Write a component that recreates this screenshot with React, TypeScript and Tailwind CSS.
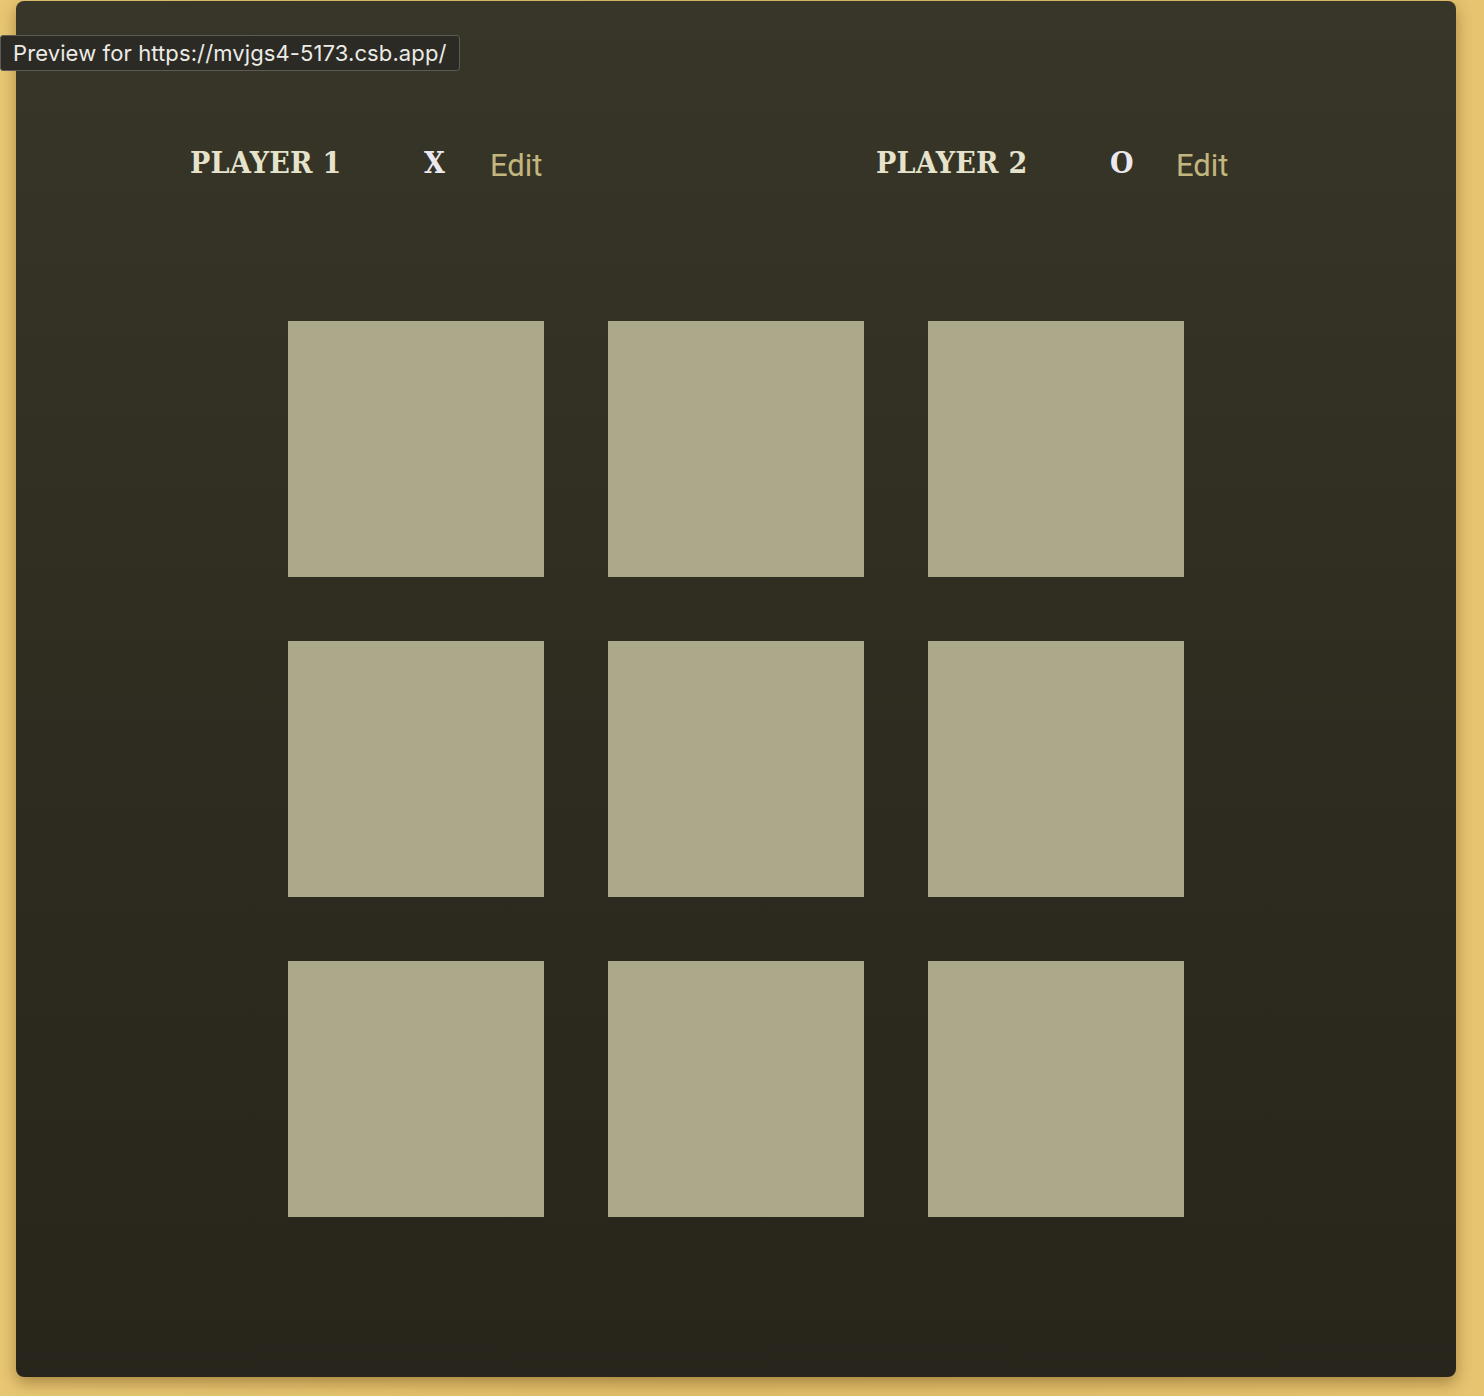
import React from "react";

const players = [
  { name: "PLAYER 1", symbol: "X" },
  { name: "PLAYER 2", symbol: "O" },
];

export default function App() {
  const cells = Array.from({ length: 9 });

  return (
    <div className="relative min-h-[1396px] w-[1484px] overflow-hidden bg-[linear-gradient(90deg,#e8c774_0%,#e2bf6a_50%,#e6c470_100%)] pt-px">
      <main className="ml-4 flex h-[1376px] w-[1440px] flex-col rounded-lg bg-[linear-gradient(180deg,#383628_0%,#2e2c20_55%,#28261c_100%)] shadow-[0_6px_16px_rgba(90,60,10,0.45)]">
        <ol className="flex pl-[174px] pt-[139px]">
          {players.map((player) => (
            <li key={player.name} className="flex w-[686px] shrink-0 items-baseline">
              <span className="w-[234px] font-['DejaVu_Serif_Condensed','DejaVu_Serif',serif] text-[30px] font-bold tracking-[0.01em] text-[#e6e3cc]">
                {player.name}
              </span>
              <span className="w-[66px] font-['DejaVu_Serif_Condensed','DejaVu_Serif',serif] text-[30px] font-bold text-[#ebe8f0]">
                {player.symbol}
              </span>
              <button
                type="button"
                className="translate-y-[3px] font-['Roboto',sans-serif] text-[31px] text-[#c2b67e]"
              >
                Edit
              </button>
            </li>
          ))}
        </ol>

        <ol className="mx-auto mt-[134px] grid grid-cols-[repeat(3,256px)] gap-16">
          {cells.map((_, i) => (
            <li key={i}>
              <button type="button" className="block h-64 w-64 bg-[#aca98a]" />
            </li>
          ))}
        </ol>
      </main>

      <div className="absolute left-0 top-[35px] rounded-[3px] border border-[#5c5b55] bg-[#2b2a25] px-3 py-[3px] font-['Inter',sans-serif] text-[22px] leading-[28px] tracking-[0.005em] text-[#ecebe6]">
        Preview for https://mvjgs4-5173.csb.app/
      </div>
    </div>
  );
}
